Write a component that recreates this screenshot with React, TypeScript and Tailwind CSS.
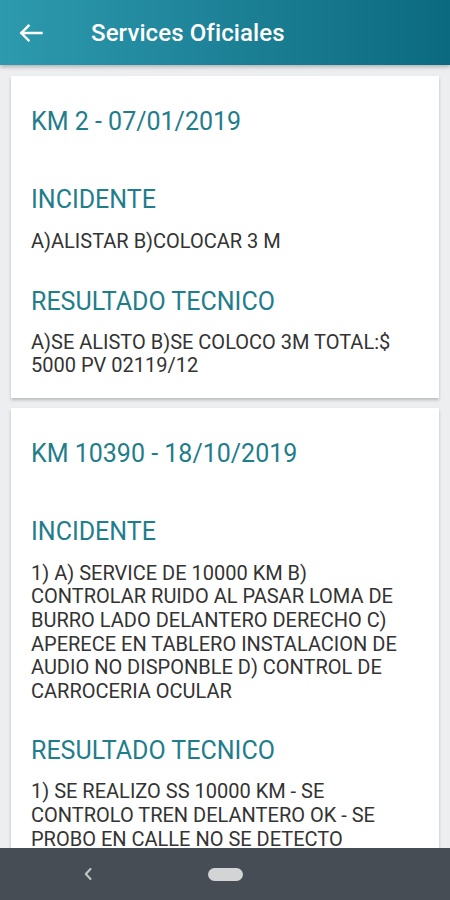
import React from "react";

type Entry = { title: string; incidente: string; resultado: string };

const entries: Entry[] = [
  {
    title: "KM 2 - 07/01/2019",
    incidente: "A)ALISTAR B)COLOCAR 3 M",
    resultado: "A)SE ALISTO B)SE COLOCO 3M TOTAL:$ 5000 PV 02119/12",
  },
  {
    title: "KM 10390 - 18/10/2019",
    incidente:
      "1) A) SERVICE DE 10000 KM B) CONTROLAR RUIDO AL PASAR LOMA DE BURRO LADO DELANTERO DERECHO C) APERECE EN TABLERO INSTALACION DE AUDIO NO DISPONBLE D) CONTROL DE CARROCERIA OCULAR",
    resultado:
      "1) SE REALIZO SS 10000 KM - SE CONTROLO TREN DELANTERO OK - SE PROBO EN CALLE NO SE DETECTO RUIDOS - SE CONTROLO CARROCERIA OK",
  },
];

function Card({ e }: { e: Entry }) {
  return (
    <div className="bg-white shadow-[0_2px_3px_rgba(0,0,0,0.22)] pl-[20px] pr-[26px] pt-[30px] pb-[20px] shrink-0">
      <div className="text-[25px] leading-[32px] text-[#1f7d8c]">{e.title}</div>
      <div className="mt-[46px] text-[25px] leading-[32px] text-[#1f7d8c]">INCIDENTE</div>
      <div className="mt-[14px] text-[20px] leading-[23.6px] text-[#333333]">{e.incidente}</div>
      <div className="mt-[32px] text-[25px] leading-[32px] text-[#1f7d8c]">RESULTADO TECNICO</div>
      <div className="mt-[13px] text-[20px] leading-[23.6px] text-[#333333]">{e.resultado}</div>
    </div>
  );
}

export default function App() {
  return (
    <div
      className="w-[450px] h-[900px] flex flex-col bg-[#eceef0] overflow-hidden"
      style={{ fontFamily: "Roboto, 'Noto Sans', sans-serif" }}
    >
      <div className="relative z-10 h-[65px] shrink-0 flex items-center bg-gradient-to-r from-[#2d9aae] to-[#0b6a80] shadow-[0_2px_4px_rgba(0,0,0,0.25)]">
        <div className="w-[91px] flex items-center pl-[19px]">
          <svg width="24" height="24" viewBox="0 0 24 24" fill="none">
            <path
              d="M22.5 12H2.5M9.5 4.8L2.3 12L9.5 19.2"
              stroke="#ffffff"
              strokeWidth="2.4"
              strokeLinecap="square"
              strokeLinejoin="miter"
            />
          </svg>
        </div>
        <div className="text-white text-[24px] font-medium leading-none tracking-[0.1px]">
          Services Oficiales
        </div>
      </div>
      <div className="flex-1 min-h-0 overflow-hidden flex flex-col gap-[10px] px-[11px] pt-[11px]">
        {entries.map((e, i) => (
          <Card key={i} e={e} />
        ))}
      </div>
      <div className="h-[52px] shrink-0 bg-[#474d55] flex items-center">
        <div className="w-[208px] flex justify-start pl-[84px]">
          <svg width="8" height="12" viewBox="0 0 8 12" fill="none">
            <path d="M6.5 1L1.8 6L6.5 11" stroke="#c4c7ca" strokeWidth="2" strokeLinecap="round" strokeLinejoin="round" />
          </svg>
        </div>
        <div className="w-[35px] h-[13px] rounded-full bg-[#d2d4d6]" />
      </div>
    </div>
  );
}
